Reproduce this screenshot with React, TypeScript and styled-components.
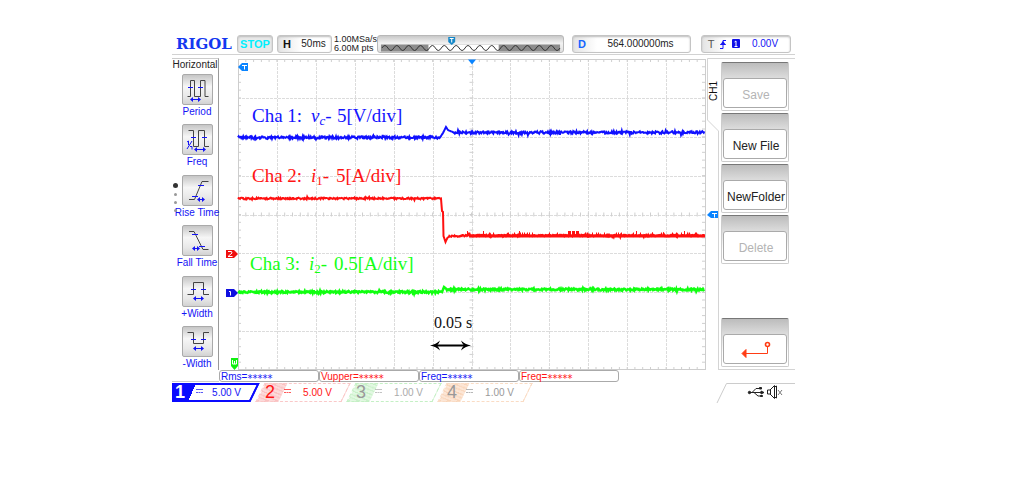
import React from "react";
import styled, { createGlobalStyle } from "styled-components";

const BLUE = "#1414f5";
const RED = "#ff1414";

const GlobalStyle = createGlobalStyle`
  body { margin: 0; background: #fff; font-family: "Liberation Sans", Arial, sans-serif; }
  *, *::before { box-sizing: border-box; }
  button { font-family: inherit; margin: 0; padding: 0; border: 0; background: none; }
`;

const Screen = styled.main`
  margin: 33px 222px 0 172px;
  min-width: 600px;
  font-size: 10px;
  line-height: 12px;
`;

const Header = styled.header`
  display: flex;
  align-items: center;
  height: 22px;
  padding: 0 4px;
  border-bottom: 1px solid #d2d2d2;
`;

const Brand = styled.h1`
  margin: 0;
  width: 61px;
  color: #1438f0;
  font: bold 15px/18px "DejaVu Serif", serif;
`;

const Readout = styled.div<{ $width: number; $ml?: number; $soft?: boolean }>`
  display: flex;
  align-items: center;
  width: ${(p) => p.$width}px;
  height: 18px;
  margin-left: ${(p) => p.$ml ?? 0}px;
  border: 1px solid #c4c4c4;
  border-radius: 3px;
  background: linear-gradient(90deg, ${(p) => (p.$soft ? "#e4e4e4" : "#f4f4f4")}, #fff 24px);
  box-shadow: inset 0 1px 2px #bbb;
`;

const RunState = styled(Readout)`
  justify-content: center;
  background: #e9e9e9;
  color: #00f0ff;
  font-weight: bold;
  font-size: 11px;
`;

const Tag = styled.b<{ $color: string }>`
  width: 18px;
  text-align: center;
  font-size: 11px;
  color: ${(p) => p.$color};
`;

const Value = styled.span<{ $color?: string }>`
  flex: 1;
  text-align: center;
  color: ${(p) => p.$color ?? "#222"};
`;

const Sampling = styled.div`
  width: 45px;
  padding-left: 2px;
  font-size: 9px;
  line-height: 9px;
  color: #222;
  white-space: nowrap;
`;

const MemoryBar = styled.div`
  flex: 1;
  height: 18px;
  border: 1px solid #b8b8b8;
  border-radius: 3px;
  background: linear-gradient(#c8c8c8, #f2f2f2 45%, #e0e0e0);
  svg { display: block; width: 100%; height: 16px; }
`;

const Main = styled.div`
  display: grid;
  grid-template-columns: 47px minmax(0, 1fr) 13px 76px;
`;

const Measures = styled.nav`
  position: relative;
  display: flex;
  flex-direction: column;
  margin-top: 3px;
  border-top: 1px solid #ccc;
  border-right: 1px solid #999;
`;

const MenuTitle = styled.h2`
  margin: 0 0 3px;
  font-size: 10px;
  font-weight: normal;
  line-height: 12px;
  text-align: center;
  color: #222;
`;

const MeasureList = styled.div`
  flex: 1;
  display: flex;
  flex-direction: column;
  justify-content: space-between;
`;

const MeasureButton = styled.button`
  display: flex;
  flex-direction: column;
  align-items: center;
  font-size: 10px;
  line-height: 13px;
  color: ${BLUE};
  white-space: nowrap;
  padding-left: 4px;
`;

const IconBox = styled.span`
  display: block;
  width: 31px;
  height: 31px;
  border: 1px solid #aaa;
  border-radius: 2px;
  background: linear-gradient(#c6c6c6, #f6f6f6 40%, #e8e8e8 75%, #d2d2d2);
  svg { display: block; margin: -1px; }
`;

const PageDots = styled.div`
  position: absolute;
  left: 1px;
  top: 124px;
  display: flex;
  flex-direction: column;
  align-items: center;
  gap: 5px;
  width: 5px;
`;

const Dot = styled.i<{ $active?: boolean }>`
  width: ${(p) => (p.$active ? 5 : 3)}px;
  height: ${(p) => (p.$active ? 5 : 3)}px;
  border-radius: 50%;
  background: ${(p) => (p.$active ? "#333" : "#999")};
`;

const Plot = styled.svg`
  display: block;
  width: 100%;
  height: auto;
  overflow: visible;
`;

const TabColumn = styled.div`
  position: relative;
  display: flex;
  flex-direction: column;
  svg { display: block; overflow: visible; }
`;

const TabEdge = styled.div`
  flex: 1;
  border-right: 1px solid #d4d4d4;
`;

const TabName = styled.span`
  position: absolute;
  left: 2px;
  top: 26px;
  writing-mode: vertical-rl;
  transform: rotate(180deg);
  font-size: 10px;
  line-height: 12px;
  color: #111;
`;

const SoftKeys = styled.div`
  display: flex;
  flex-direction: column;
  gap: 2px;
  margin-top: 3px;
  padding: 3px 6px 2px 2px;
  border-top: 1px solid #d4d4d4;
  border-bottom: 1px solid #d4d4d4;
`;

const SoftKey = styled.button<{ $last?: boolean }>`
  display: flex;
  height: 49px;
  margin-top: ${(p) => (p.$last ? "auto" : "0")};
  padding: 15px 1px 2px;
  border: 1px solid #ccc;
  border-top-color: #777;
  border-radius: 2px;
  background: linear-gradient(#bcbcbc, #dadada 14px, #fff 34px);
`;

const KeyFace = styled.span<{ $off?: boolean }>`
  flex: 1;
  display: flex;
  align-items: center;
  justify-content: center;
  height: 30px;
  padding: 4px 0 0 2px;
  border: 1px solid #aaa;
  border-radius: 3px;
  background: #fff;
  font-size: 12px;
  line-height: 16px;
  color: ${(p) => (p.$off ? "#b4b4b4" : "#222")};
`;

const Results = styled.div`
  display: flex;
  height: 12px;
  border-bottom: 1px solid #ccc;
  width: 47px;
  padding-left: 47px;
`;

const Result = styled.div<{ $color: string }>`
  flex: 0 0 100px;
  height: 12px;
  padding-left: 1px;
  border: 1px solid #aaa;
  border-radius: 3px;
  font-size: 10px;
  line-height: 12px;
  white-space: nowrap;
  color: ${(p) => p.$color};
`;

const Stars = styled.span`
  font: 10px/8px "DejaVu Sans", sans-serif;
  vertical-align: -2px;
`;

const Footer = styled.footer`
  display: flex;
  gap: 5px;
  height: 21px;
  padding-top: 1px;
`;

const Channel = styled.button<{ $ink: string; $line: string; $fill: string; $first?: boolean }>`
  position: relative;
  display: flex;
  align-items: center;
  width: ${(p) => (p.$first ? 83 : 86)}px;
  height: 19px;
  color: ${(p) => p.$ink};
  clip-path: ${(p) => (p.$first ? "inset(0 -8px 0 0)" : "none")};
  &::before {
    content: "";
    position: absolute;
    z-index: -1;
    inset: 0 0 0 ${(p) => (p.$first ? "-10px" : "0")};
    transform: skewX(-26deg);
    border: ${(p) => (p.$first ? `2px solid ${p.$line}` : `1px dashed ${p.$line}`)};
    background: linear-gradient(90deg, transparent ${(p) => (p.$first ? 28 : 22)}px, #fff 0),
      ${(p) => p.$fill};
  }
`;

const ChannelNumber = styled.span<{ $color: string; $first?: boolean }>`
  width: 22px;
  padding-left: ${(p) => (p.$first ? 3 : 5)}px;
  text-align: left;
  font-size: 18px;
  line-height: 21px;
  font-weight: ${(p) => (p.$first ? "bold" : "normal")};
  color: ${(p) => p.$color};
`;

const Scale = styled.span`
  flex: 1;
  display: flex;
  justify-content: space-between;
  padding: 0 14px 0 2px;
  font-size: 10px;
  line-height: 20px;
  svg { margin-top: 5px; }
`;

const StatusCorner = styled.div`
  margin-left: auto;
  width: 79px;
  svg { display: block; overflow: visible; }
`;

function DoubleArrow({ x1, x2, y }: { x1: number; x2: number; y: number }) {
  return (
    <g>
      <path d={`M${x1} ${y}H${x2}`} stroke={BLUE} />
      <path
        d={`M${x1 - 1} ${y}l3-2.5v5zM${x2 + 1} ${y}l-3-2.5v5z`}
        fill={BLUE}
      />
    </g>
  );
}

const measures = [
  { name: "Period", wave: "M5.5 22.5H8.5V6.5H12.5V22.5H18.5V6.5H23V22.5H26.5", ticks: "M6 13.5h5M16 13.5h5", arrow: [9, 18, 25.5] },
  { name: "Freq", wave: "M6.5 6.5H11.5V22.5H16.5V6.5H22.5V22.5H27", ticks: "M9 13.5h5M20 13.5h5M5 18l1.500-1v4M10 17l-5 8M8 22.5h2v3", arrow: [13, 23, 25.5] },
  { name: "Rise Time", wave: "M7 24.5H12.5L20 6.5H26.5", ticks: "M16 10.5h6M10 21.5h6", arrow: [16, 22, 24.5] },
  { name: "Fall Time", wave: "M7 6.5H12L21 24.5H26.5", ticks: "M10 9.5h6M17 21.5h6", arrow: [11, 17, 23.5] },
  { name: "+Width", wave: "M5.5 18.5H11.5V6.5H21.5V18.5H27", ticks: "M9 13.5h5M19 13.5h5", arrow: [12, 21, 22.5] },
  { name: "-Width", wave: "M5.5 6.5H11.5V17.5H21.5V6.5H27", ticks: "M9 13.5h5M19 13.5h5", arrow: [12, 21, 22.5] },
];

/* Plot coordinates: the graticule spans x 19..486 and y 4..315. */
const LEFT = 19;
const RIGHT = 486;
const TOP = 4;
const BOTTOM = 315;
const MID_X = (LEFT + RIGHT) / 2;
const MID_Y = (TOP + BOTTOM) / 2;

function noise(seed: number) {
  let s = seed;
  return () => {
    s = (s * 16807) % 2147483647;
    return s / 2147483647;
  };
}

function trace(points: number[][], seed: number, amp: number) {
  const rnd = noise(seed);
  let d = "";
  for (let i = 0; i < points.length - 1; i++) {
    const [xa, ya] = points[i];
    const [xb, yb] = points[i + 1];
    const steps = Math.max(1, Math.round((xb - xa) * 1.5));
    for (let k = 0; k < steps; k++) {
      const t = k / steps;
      const spike = rnd() > 0.95 ? 2 : 1;
      const y = ya + (yb - ya) * t + (steps > 20 ? (rnd() - 0.5) * amp * spike : 0);
      d += `${d ? "L" : "M"}${(xa + (xb - xa) * t).toFixed(1)} ${y.toFixed(1)}`;
    }
  }
  return d;
}

const blueTrace = trace([[19, 82.5], [221, 82.5], [224, 78], [227, 72], [229, 75], [235, 77.6], [486, 77.4]], 11, 2.6);
const redTrace = trace([[19, 143.5], [222, 143.5], [223, 156], [224, 157], [224.5, 181], [226.5, 187], [229, 181.5], [250, 180.5], [486, 180.5]], 29, 1.6);
const greenTrace = trace([[19, 237], [223, 237], [225, 232], [228, 234.5], [486, 234.5]], 47, 2);

const rnd = noise(83);
const redSpikes = Array.from({ length: 48 }, (_, i) => {
  const x = i < 9 ? 349.5 + (i % 3) + Math.floor(i / 3) * 4 : Math.round(248 + rnd() * 236) + 0.5;
  return `M${x} 180V${i < 14 ? 176 : 177.5}`;
}).join("");

function Graticule() {
  const cols = Array.from({ length: 11 }, (_, i) => LEFT + ((i + 1) * (RIGHT - LEFT)) / 12);
  const rows = Array.from({ length: 7 }, (_, i) => TOP + ((i + 1) * (BOTTOM - TOP)) / 8);
  let ticks = "";
  for (let i = 1; i < 60; i++) {
    const x = (LEFT + (i * (RIGHT - LEFT)) / 60).toFixed(1);
    ticks += `M${x} ${TOP}v3M${x} ${MID_Y - 2}v4M${x} ${BOTTOM}v-3`;
  }
  for (let i = 1; i < 40; i++) {
    const y = (TOP + (i * (BOTTOM - TOP)) / 40).toFixed(1);
    ticks += `M${LEFT} ${y}h3M${MID_X - 2} ${y}h4M${RIGHT} ${y}h-3`;
  }
  return (
    <g fill="none">
      <path
        d={cols.map((x) => `M${Math.round(x) + 0.5} ${TOP}V${BOTTOM}`).join("")}
        stroke="#dcdcdc"
        strokeDasharray="3 1"
      />
      <path
        d={rows.map((y) => `M${LEFT} ${Math.round(y) + 0.5}H${RIGHT}`).join("")}
        stroke="#dcdcdc"
        strokeDasharray="3 1"
      />
      <path d={ticks} stroke="#cfcfcf" />
      <rect x={LEFT + 0.5} y={TOP + 0.5} width={RIGHT - LEFT} height={BOTTOM - TOP - 1} stroke="#cdcdcd" />
    </g>
  );
}

function Annotation({ y, x, color, name, symbol, sub, scale, gap }: {
  y: number; x: number; color: string; name: string; symbol: string; sub: string; scale: string; gap: number;
}) {
  return (
    <text y={y} fill={color} fontFamily='"Liberation Serif", serif' fontSize="19">
      <tspan x={x}>{name}</tspan>
      <tspan x={x + 59} fontStyle="italic">{symbol}</tspan>
      <tspan fontSize="13" dy="3" fontStyle={sub === "c" ? "italic" : "normal"}>{sub}</tspan>
      <tspan dy="-3">-</tspan>
      <tspan x={x + gap}>{scale}</tspan>
    </text>
  );
}

function Scope() {
  return (
    <Plot viewBox="0 0 487 315" role="img" aria-label="Channel waveforms">
      <Graticule />
      <path d={blueTrace} fill="none" stroke="#1010ff" strokeWidth="2" />
      <path d={redTrace} fill="none" stroke="#ff1010" strokeWidth="2" />
      <path d="M250 181H486" stroke="#ff1010" strokeWidth="3" />
      <path d={redSpikes} stroke="#ff1010" />
      <path d={greenTrace} fill="none" stroke="#10ff10" strokeWidth="2.5" />

      <Annotation x={33} y={67} color="#1414ff" name="Cha 1:" symbol="v" sub="c" scale="5[V/div]" gap={85} />
      <Annotation x={33} y={127} color="#ff1414" name="Cha 2:" symbol="i" sub="1" scale="5[A/div]" gap={84} />
      <Annotation x={31} y={215} color="#14ff14" name="Cha 3:" symbol="i" sub="2" scale="0.5[A/div]" gap={84} />

      <text x="234" y="273" textAnchor="middle" fontFamily='"Liberation Serif", serif' fontSize="16" fill="#111">0.05 s</text>
      <path d="M216 290.5H247" stroke="#000" strokeWidth="2" />
      <path d="M211 290.5q6-1 10-5q-1 3-3 5q2 2 3 5q-4-4-10-5zM252 290.5q-6-1-10-5q1 3 3 5q-2 2-3 5q4-4 10-5z" fill="#000" />

      <path d="M249 4.5h8l-4 5z" fill="#0a84ff" />
      <path d="M19 12l4-4h6v8h-6z" fill="#0a84ff" />
      <path d="M23 10.5h5M25.5 10.5v4" stroke="#fff" />
      <path d="M488 160l4-4h7v7h-7z" fill="#0a84ff" />
      <path d="M493 158.5h5M495.5 158.5v4" stroke="#fff" />

      <path d="M7 195h8l4 4l-4 4h-8z" fill="#f01010" />
      <path d="M9 196.5h3.5l.5 1.500l-4 3.500h4.500" fill="none" stroke="#fff" />
      <path d="M7 234h8l4 4l-4 4h-8z" fill="#1010e0" />
      <path d="M10 236.5h1.5v4" fill="none" stroke="#fff" />
      <path d="M12 303h7v8l-3.5 4l-3.5-4z" fill="#10f010" />
      <path d="M13.5 305v4h4v-4M15.5 306v3" fill="none" stroke="#fff" />
    </Plot>
  );
}

const wave = "M4 12" + Array.from({ length: 15 }, () => "q1.5-2.5 3-2.5t3 2.5t3 2.5t3-2.5").join("");

function Coupling() {
  return (
    <svg width="7" height="7" viewBox="0 0 7 7" stroke="currentColor" aria-hidden="true">
      <path d="M0 1.5h7M0 4.5h2M2.500 4.5h2M5 4.5h2" opacity=".7" />
    </svg>
  );
}

const hatch = (c: string, bg: string) => `repeating-linear-gradient(18deg, ${c} 0 1px, ${bg} 1px 3px)`;

const channels = [
  { n: 1, scale: "5.00 V", ink: BLUE, num: "#fff", line: "#0a0aff", fill: "#0a0aff" },
  { n: 2, scale: "5.00 V", ink: RED, num: RED, line: "#fac8c8", fill: hatch("#fabfbf", "#fcdada") },
  { n: 3, scale: "1.00 V", ink: "#aaa", num: "#999", line: "#c4f0c4", fill: hatch("#c8f0c8", "#e2f8e2") },
  { n: 4, scale: "1.00 V", ink: "#999", num: "#999", line: "#fadcc4", fill: hatch("#f8d4b8", "#fce6d6") },
];

const results = [
  { name: "Rms", color: BLUE },
  { name: "Vupper", color: RED },
  { name: "Freq", color: BLUE },
  { name: "Freq", color: RED },
];

export default function App() {
  return (
    <>
      <GlobalStyle />
      <Screen>
        <Header>
          <Brand>RIGOL</Brand>
          <RunState $width={36}>STOP</RunState>
          <Readout $width={55} $ml={4} $soft>
            <Tag $color="#111">H</Tag>
            <Value>50ms</Value>
          </Readout>
          <Sampling>1.00MSa/s<br />6.00M pts</Sampling>
          <MemoryBar>
            <svg viewBox="0 0 187 16" preserveAspectRatio="none" aria-hidden="true">
              <rect x="3" y="8.5" width="181" height="7" fill="#8c8c8c" />
              <rect x="51" y="8.5" width="71" height="7" fill="#fff" />
              <path d={wave} stroke="#333" fill="none" />
              <path d="M71 1h7v5l-3.5 3l-3.5-3z" fill="#1688c8" />
              <path d="M72.5 2.5h4M74.5 2.5v4" stroke="#fff" />
            </svg>
          </MemoryBar>
          <Readout $width={119} $ml={8} $soft>
            <Tag $color="#1464ff">D</Tag>
            <Value>564.000000ms</Value>
          </Readout>
          <Readout $width={90} $ml={10} $soft>
            <Tag as="span" $color="#555">T</Tag>
            <svg width="20" height="12" viewBox="-2 0 20 12" aria-hidden="true">
              <path d="M-2 10.5H1V2.5H4M-1.5 6.5h5" fill="none" stroke={BLUE} />
              <path d="M-2 7h6l-3-4z" fill={BLUE} />
              <rect x="10" y="1" width="8" height="9" rx="1" fill="#1010e8" />
              <path d="M12.5 4l1.5-1v6M12.5 8.5h3" fill="none" stroke="#fff" />
            </svg>
            <Value $color={BLUE}>0.00V</Value>
          </Readout>
        </Header>

        <Main>
          <Measures aria-label="Horizontal measurements">
            <MenuTitle>Horizontal</MenuTitle>
            <MeasureList>
              {measures.map((m) => (
                <MeasureButton key={m.name} type="button">
                  <IconBox>
                    <svg width="31" height="31" viewBox="0 0 31 31" fill="none" aria-hidden="true">
                      <path d={m.wave} stroke="#444" />
                      <path d={m.ticks} stroke={BLUE} />
                      <DoubleArrow x1={m.arrow[0]} x2={m.arrow[1]} y={m.arrow[2]} />
                    </svg>
                  </IconBox>
                  {m.name}
                </MeasureButton>
              ))}
            </MeasureList>
            <PageDots>
              <Dot $active />
              <Dot />
              <Dot />
              <Dot />
            </PageDots>
          </Measures>

          <Scope />

          <TabColumn>
            <svg width="13" height="76" viewBox="0 0 13 76" fill="none" stroke="#d4d4d4" aria-hidden="true">
              <path d="M13 3.5H1.5V65L12.5 76" />
            </svg>
            <TabEdge />
            <TabName>CH1</TabName>
          </TabColumn>

          <SoftKeys>
            <SoftKey type="button" disabled><KeyFace $off>Save</KeyFace></SoftKey>
            <SoftKey type="button"><KeyFace>New File</KeyFace></SoftKey>
            <SoftKey type="button"><KeyFace>NewFolder</KeyFace></SoftKey>
            <SoftKey type="button" disabled><KeyFace $off>Delete</KeyFace></SoftKey>
            <SoftKey type="button" $last aria-label="Back">
              <KeyFace>
                <svg width="30" height="20" viewBox="0 0 30 20" fill="none" stroke="#ff3c14" aria-hidden="true">
                  <circle cx="26.5" cy="3.5" r="2" strokeWidth="1.6" />
                  <path d="M26.5 6V12.5H5" />
                  <path d="M1 12.5l4-4v8z" fill="#ff3c14" />
                </svg>
              </KeyFace>
            </SoftKey>
          </SoftKeys>
        </Main>

        <Results>
          {results.map((r, i) => (
            <Result key={i} $color={r.color}>{r.name}=<Stars>*****</Stars></Result>
          ))}
        </Results>

        <Footer>
          {channels.map((c) => (
            <Channel key={c.n} type="button" $ink={c.ink} $line={c.line} $fill={c.fill} $first={c.n === 1}>
              <ChannelNumber $color={c.num} $first={c.n === 1}>{c.n}</ChannelNumber>
              <Scale><Coupling />{c.scale}</Scale>
            </Channel>
          ))}
          <StatusCorner>
            <svg width="79" height="20" viewBox="0 0 79 20" fill="none" aria-hidden="true">
              <path d="M1 20L10.5 .5H79" stroke="#ccc" />
              <g stroke="#222">
                <path d="M34 9.5H46M36 9.5l4-4h4M38 9.5l4 3.5h3" />
                <circle cx="33.5" cy="9.5" r="1.2" fill="#222" />
                <path d="M45 8l3 1.5l-3 1.5z" fill="#222" />
                <path d="M43.5 4.5h2v1.5h-2zM44.5 12.5h2v1h-2z" fill="#222" />
                <path d="M51.5 7h2.500l4.500-4.500v13l-4.500-4.500h-2.500zM54.500 7v4M60.5 3v12l-2-1M60.500 3l-2 1" />
                <path d="M62 7l4 5M66 7l-4 5" stroke="#777" />
              </g>
            </svg>
          </StatusCorner>
        </Footer>
      </Screen>
    </>
  );
}
